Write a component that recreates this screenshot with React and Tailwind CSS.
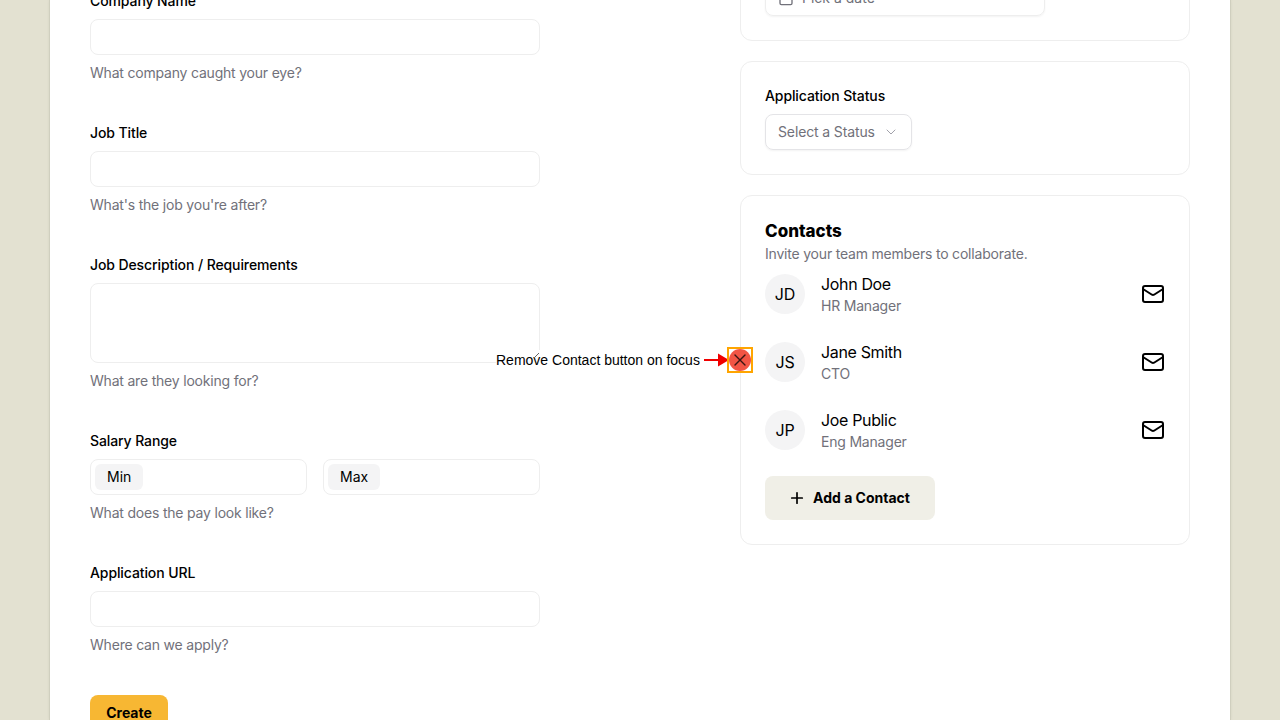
import React from "react";
import { Calendar, ChevronDown, Mail, Plus, X } from "lucide-react";

const font = "font-['Inter','Liberation_Sans',sans-serif]";

function Field({ label, help, children }) {
  return (
    <div className="flex flex-col gap-2">
      <label className="text-sm leading-5 font-medium tracking-[-0.1px] text-black">{label}</label>
      {children}
      <p className="text-sm leading-5 tracking-[-0.2px] text-[#71717a]">{help}</p>
    </div>
  );
}

function TextInput() {
  return <input className="h-9 w-full rounded-lg border border-[#eeeeee] bg-white px-3 text-sm" />;
}

function Addon({ name }) {
  return (
    <div className="flex h-9 flex-1 items-center rounded-lg border border-[#eeeeee] bg-white pl-1">
      <span className="flex h-[26px] items-center rounded-md bg-[#f4f4f5] px-3 text-sm text-black">{name}</span>
    </div>
  );
}

function Contact({ initials, name, role }) {
  return (
    <div className="flex items-center justify-between">
      <div className="flex items-center gap-4">
        <div className="flex h-10 w-10 items-center justify-center rounded-full bg-[#f4f4f5] text-base tracking-[-0.2px] text-black">{initials}</div>
        <div className="flex flex-col">
          <span className="text-base leading-6 tracking-[-0.35px] text-black">{name}</span>
          <span className="text-sm leading-5 tracking-[-0.2px] text-[#71717a]">{role}</span>
        </div>
      </div>
      <Mail size={24} strokeWidth={2} className="text-black" />
    </div>
  );
}

function Card({ children }) {
  return <section className="rounded-xl border border-[#eeeeee] bg-white p-6">{children}</section>;
}

export default function App() {
  return (
    <div className={`${font} h-screen overflow-hidden bg-[#e3e1d1] px-[50px]`}>
      <main className="relative h-full overflow-hidden bg-white px-10 shadow-[0_0_0_1px_#d0cfbf,0_0_3px_#c5c4b4]">
        <div className="flex gap-[200px]">
          <div className="-mt-[9px] flex w-[450px] shrink-0 flex-col gap-10">
            <Field label="Company Name" help="What company caught your eye?"><TextInput /></Field>
            <Field label="Job Title" help="What's the job you're after?"><TextInput /></Field>
            <Field label="Job Description / Requirements" help="What are they looking for?">
              <textarea className="block h-20 w-full resize-none rounded-lg border border-[#eeeeee] bg-white px-3 py-2 text-sm" />
            </Field>
            <Field label="Salary Range" help="What does the pay look like?">
              <div className="flex gap-4">
                <Addon name="Min" />
                <Addon name="Max" />
              </div>
            </Field>
            <Field label="Application URL" help="Where can we apply?"><TextInput /></Field>
            <button className="flex h-9 w-[78px] items-center justify-center rounded-lg bg-[#f7b733] text-sm font-bold text-black">Create</button>
          </div>

          <div className="-mt-[45px] flex w-[450px] shrink-0 flex-col gap-5">
            <Card>
              <button className="flex h-9 w-[280px] items-center gap-2 rounded-lg border border-[#eeeeee] px-3 text-sm text-[#71717a] shadow-xs">
                <Calendar size={16} />
                Pick a date
              </button>
            </Card>
            <Card>
              <div className="flex flex-col items-start gap-2">
                <label className="text-sm leading-5 font-medium tracking-[-0.1px] text-black">Application Status</label>
                <button className="flex h-9 w-[147px] items-center justify-between rounded-lg border border-[#e4e4e7] px-3 text-sm tracking-[-0.13px] text-[#71717a] shadow-xs">
                  Select a Status
                  <ChevronDown size={16} strokeWidth={1.5} className="text-[#a1a1aa]" />
                </button>
              </div>
            </Card>
            <Card>
              <h2 className="-mt-px mb-px text-[17px] leading-6 font-extrabold text-black">Contacts</h2>
              <p className="text-sm leading-5 tracking-[-0.2px] text-[#71717a]">Invite your team members to collaborate.</p>
              <div className="mt-2 flex flex-col gap-6">
                <Contact initials="JD" name="John Doe" role="HR Manager" />
                <Contact initials="JS" name="Jane Smith" role="CTO" />
                <Contact initials="JP" name="Joe Public" role="Eng Manager" />
              </div>
              <button className="mt-6 flex h-11 w-[170px] items-center justify-center gap-2 rounded-lg bg-[#f0efe7] text-sm font-bold text-black">
                <Plus size={18} strokeWidth={2.25} className="-ml-0.5 -mr-px" />
                Add a Contact
              </button>
            </Card>
          </div>
        </div>

        <div className="absolute left-[446px] top-[347px] flex h-[26px] items-center">
          <span className="bg-white font-['Liberation_Sans',sans-serif] text-sm text-black">Remove Contact button on focus</span>
          <svg width="7" height="7" viewBox="0 0 7 7" className="absolute left-[37px] top-[5px]">
            <path d="M1 6L6 1" stroke="#666666" strokeWidth="1" />
          </svg>
          <svg width="26" height="14" viewBox="0 0 26 14" className="ml-1">
            <path d="M0 7h16" stroke="#f00000" strokeWidth="2" />
            <path d="M14 0.500L25 7L14 13.500z" fill="#f00000" />
          </svg>
          <span className="-ml-[3px] flex h-[26px] w-[26px] items-center justify-center border-2 border-[#ffa500]">
            <span className="flex h-[22px] w-[22px] items-center justify-center rounded-full bg-[#f25545]">
              <X size={20} strokeWidth={1.6} className="text-[#3a1512]" />
            </span>
          </span>
        </div>
      </main>
    </div>
  );
}
